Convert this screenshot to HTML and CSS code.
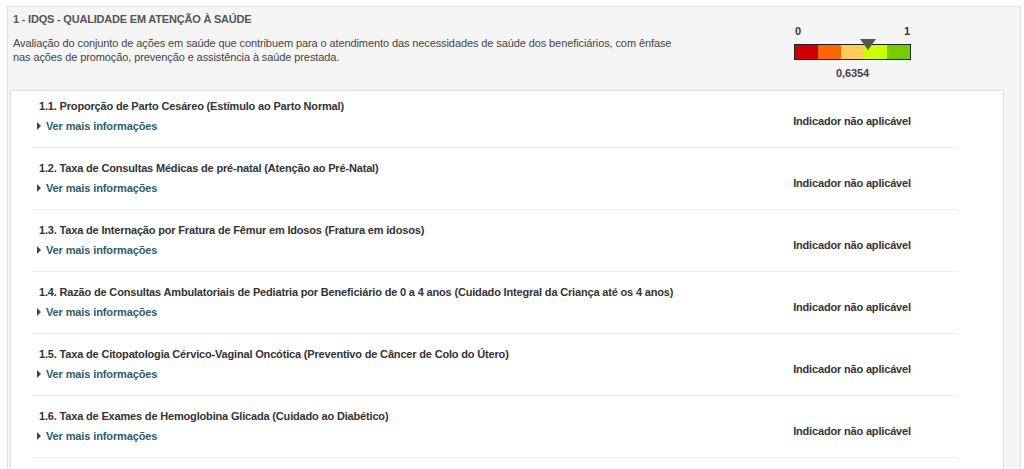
FILE: index.html
```html
<!DOCTYPE html>
<html lang="pt-BR">
<head>
<meta charset="utf-8">
<title>IDQS</title>
<link rel="stylesheet" href="styles.css">
</head>
<body>
<section class="panel">
  <header class="panel-head">
    <div class="head-text">
      <h2 class="head-title">1 - IDQS - QUALIDADE EM ATENÇÃO À SAÚDE</h2>
      <p class="head-desc">Avaliação do conjunto de ações em saúde que contribuem para o atendimento das necessidades de saúde dos beneficiários, com ênfase nas ações de promoção, prevenção e assistência à saúde prestada.</p>
    </div>
    <div class="gauge">
      <div class="gauge-labels"><span>0</span><span>1</span></div>
      <div class="gauge-bar">
        <span class="seg seg-1"></span>
        <span class="seg seg-2"></span>
        <span class="seg seg-3"></span>
        <span class="seg seg-4"></span>
        <span class="seg seg-5"></span>
        <span class="gauge-marker" style="left: 63.54%"></span>
      </div>
      <div class="gauge-value">0,6354</div>
    </div>
  </header>
  <div class="list-box">
    <ul class="rows">
      <li class="row">
        <div class="row-main">
          <div class="row-title">1.1. Proporção de Parto Cesáreo (Estímulo ao Parto Normal)</div>
          <a class="more"><span class="caret"></span>Ver mais informações</a>
        </div>
        <div class="row-status">Indicador não aplicável</div>
      </li>
      <li class="row">
        <div class="row-main">
          <div class="row-title">1.2. Taxa de Consultas Médicas de pré-natal (Atenção ao Pré-Natal)</div>
          <a class="more"><span class="caret"></span>Ver mais informações</a>
        </div>
        <div class="row-status">Indicador não aplicável</div>
      </li>
      <li class="row">
        <div class="row-main">
          <div class="row-title">1.3. Taxa de Internação por Fratura de Fêmur em Idosos (Fratura em idosos)</div>
          <a class="more"><span class="caret"></span>Ver mais informações</a>
        </div>
        <div class="row-status">Indicador não aplicável</div>
      </li>
      <li class="row">
        <div class="row-main">
          <div class="row-title">1.4. Razão de Consultas Ambulatoriais de Pediatria por Beneficiário de 0 a 4 anos (Cuidado Integral da Criança até os 4 anos)</div>
          <a class="more"><span class="caret"></span>Ver mais informações</a>
        </div>
        <div class="row-status">Indicador não aplicável</div>
      </li>
      <li class="row">
        <div class="row-main">
          <div class="row-title">1.5. Taxa de Citopatologia Cérvico-Vaginal Oncótica (Preventivo de Câncer de Colo do Útero)</div>
          <a class="more"><span class="caret"></span>Ver mais informações</a>
        </div>
        <div class="row-status">Indicador não aplicável</div>
      </li>
      <li class="row">
        <div class="row-main">
          <div class="row-title">1.6. Taxa de Exames de Hemoglobina Glicada (Cuidado ao Diabético)</div>
          <a class="more"><span class="caret"></span>Ver mais informações</a>
        </div>
        <div class="row-status">Indicador não aplicável</div>
      </li>
    </ul>
  </div>
</section>
</body>
</html>
```

FILE: styles.css
```css
* { box-sizing: border-box; }

html, body {
  margin: 0;
  padding: 0;
  background: #ffffff;
  overflow: hidden;
}

body {
  font-family: "Liberation Sans", Arial, sans-serif;
  font-size: 11px;
  color: #333;
}

.panel {
  margin: 6px 3px 0 7px;
  background: #f5f5f5;
  border: 1px solid #e2e2e2;
  border-bottom: none;
  min-height: 470px;
}

.panel-head {
  display: flex;
  align-items: flex-start;
  padding: 4px 0 9px 5px;
}

.head-text {
  width: 680px;
}

.head-title {
  margin: 0;
  font-size: 11px;
  line-height: 16px;
  font-weight: bold;
  letter-spacing: -0.2px;
  color: #555;
}

.head-desc {
  margin: 9px 0 0;
  width: 665px;
  font-size: 11px;
  line-height: 14px;
  letter-spacing: -0.1px;
  color: #444;
}

.gauge {
  margin: 12px 0 0 101px;
  width: 117px;
}

.gauge-labels {
  display: flex;
  justify-content: space-between;
  padding: 0 1px;
  line-height: 16px;
  font-weight: bold;
  color: #333;
}

.gauge-bar {
  position: relative;
  margin-top: 5px;
  height: 16px;
  display: flex;
  border: 1px solid #222;
}

.seg { flex: 1; }
.seg-1 { background: #cc0000; }
.seg-2 { background: #ff6600; }
.seg-3 { background: #ffcc55; }
.seg-4 { background: #ccff00; }
.seg-5 { background: #77cc00; }

.gauge-marker {
  position: absolute;
  top: -6px;
  width: 0;
  height: 0;
  transform: translateX(-50%);
  border-left: 8px solid transparent;
  border-right: 8px solid transparent;
  border-top: 11px solid #555;
}

.gauge-value {
  margin-top: 5px;
  text-align: center;
  line-height: 16px;
  font-weight: bold;
  letter-spacing: -0.1px;
  color: #444;
}

.list-box {
  margin: 0 16px 0 2px;
  background: #fff;
  border: 1px solid #dedede;
  border-bottom: none;
  min-height: 380px;
}

.rows {
  list-style: none;
  margin: 0;
  padding: 0 45px 0 21px;
}

.row {
  display: flex;
  padding: 12px 0 13px;
  border-bottom: 1px solid #eeeeee;
}

.row:first-child {
  padding-top: 7px;
}

.row-main {
  flex: 1;
}

.row-title {
  padding-left: 7px;
  line-height: 16px;
  font-weight: bold;
  letter-spacing: -0.17px;
  color: #333;
}

.more {
  display: flex;
  align-items: center;
  margin-top: 4px;
  padding-left: 5px;
  line-height: 16px;
  font-weight: bold;
  letter-spacing: -0.12px;
  color: #2d5d69;
  cursor: pointer;
}

.caret {
  width: 0;
  height: 0;
  margin-right: 5px;
  border-left: 4px solid #444;
  border-top: 4px solid transparent;
  border-bottom: 4px solid transparent;
}

.row-status {
  width: 212px;
  margin-top: 15px;
  text-align: center;
  line-height: 16px;
  font-weight: bold;
  letter-spacing: -0.17px;
  color: #333;
}
```
